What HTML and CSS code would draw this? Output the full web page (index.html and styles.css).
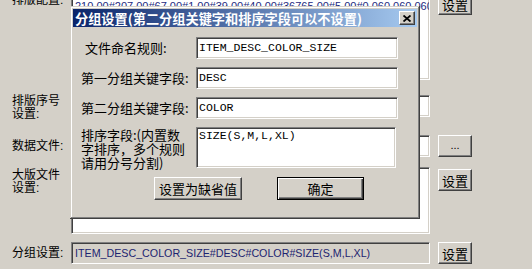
FILE: index.html
```html
<!DOCTYPE html>
<html lang="zh-CN">
<head>
    <meta charset="UTF-8">
    <title>分组设置</title>
    <link rel="stylesheet" href="styles.css">
</head>
<body>
    <div class="screen">
        <!-- janela de fundo -->
        <div class="form">
            <div class="row row-config">
                <div class="label">排版配置:</div>
                <div class="field config-box">
                    <span class="config-text">210.00#207.00#67.00#1.00#39.00#40.00#36765.00#5.00#0.060.060.060,</span>
                </div>
                <div class="btn side-btn">设置</div>
            </div>
            <div class="row row-seq">
                <div class="label">排版序号<br>设置:</div>
                <div class="field"></div>
            </div>
            <div class="row row-data">
                <div class="label">数据文件:</div>
                <div class="field"></div>
                <div class="btn side-btn dots">...</div>
            </div>
            <div class="row row-plate">
                <div class="label">大版文件<br>设置:</div>
                <div class="field plate-box"></div>
                <div class="btn side-btn">设置</div>
            </div>
            <div class="row row-group">
                <div class="label">分组设置:</div>
                <div class="field readonly">ITEM_DESC_COLOR_SIZE#DESC#COLOR#SIZE(S,M,L,XL)</div>
                <div class="btn side-btn">设置</div>
            </div>
        </div>

        <!-- dialogo por cima -->
        <div class="dialog">
            <div class="titlebar">
                <span class="title">分组设置(第二分组关键字和排序字段可以不设置)</span>
                <div class="btn close-btn">
                    <svg width="8" height="7" viewBox="0 0 8 7">
                        <path d="M0.5 0.5 L7.5 6.5 M7.5 0.5 L0.5 6.5" stroke="#000" stroke-width="1.8" fill="none"/>
                    </svg>
                </div>
            </div>
            <div class="dialog-body">
                <div class="drow">
                    <div class="dlabel first">文件命名规则:</div>
                    <div class="input">ITEM_DESC_COLOR_SIZE</div>
                </div>
                <div class="drow">
                    <div class="dlabel">第一分组关键字段:</div>
                    <div class="input">DESC</div>
                </div>
                <div class="drow">
                    <div class="dlabel">第二分组关键字段:</div>
                    <div class="input">COLOR</div>
                </div>
                <div class="drow sort-row">
                    <div class="dlabel multi">排序字段:(内置数<br>字排序，多个规则<br>请用分号分割)</div>
                    <div class="input textarea">SIZE(S,M,L,XL)</div>
                </div>
                <div class="actions">
                    <div class="btn action-btn">设置为缺省值</div>
                    <div class="btn action-btn default">确定</div>
                </div>
            </div>
        </div>
    </div>
</body>
</html>
```

FILE: styles.css
```css
body {
    margin: 0;
    background: #d4d0c8;
    font-family: "Liberation Sans", "Noto Sans CJK SC", sans-serif;
    color: #000;
}

.screen {
    position: relative;
    width: 532px;
    height: 269px;
    overflow: hidden;
    background: #d4d0c8;
}

/* janela de fundo */
.form {
    margin-top: -10px;
    padding-left: 12px;
    display: flex;
    flex-direction: column;
}

.row {
    display: flex;
    align-items: flex-start;
}

.label {
    width: 59px;
    font-size: 12px;
    line-height: 13px;
}

.field {
    box-sizing: border-box;
    width: 359px;
    height: 22px;
    background: #fff;
    border-top: 1px solid #808080;
    border-left: 1px solid #808080;
    border-right: 1px solid #fff;
    border-bottom: 1px solid #fff;
    box-shadow: inset 1px 1px #404040, inset -1px -1px #d4d0c8;
}

.btn {
    box-sizing: border-box;
    display: flex;
    align-items: center;
    justify-content: center;
    background: #d4d0c8;
    border-top: 1px solid #fff;
    border-left: 1px solid #fff;
    border-right: 1px solid #404040;
    border-bottom: 1px solid #404040;
    box-shadow: inset -1px -1px #808080;
    font-family: "Noto Sans CJK SC", sans-serif;
    font-size: 13px;
}

.side-btn {
    width: 34px;
    height: 22px;
    margin-left: 8px;
}

.dots {
    font-family: "Liberation Sans", sans-serif;
    font-size: 11px;
    padding-bottom: 3px;
}

.row-config .label {
    padding-top: 4px;
}

.config-box {
    height: 90px;
    padding: 5px 0 0 3px;
    overflow: hidden;
}

.config-text {
    font-size: 11px;
    color: #1c2a80;
    white-space: nowrap;
}

.row-config .side-btn {
    margin-top: 3px;
}

.row-seq {
    margin-top: 15px;
}

.row-data {
    margin-top: 14px;
    align-items: center;
}

.row-plate {
    margin-top: 10px;
}

.row-plate .label {
    padding-top: 2px;
}

.plate-box {
    height: 67px;
}

.row-plate .side-btn {
    margin-top: 2px;
}

.row-group {
    margin-top: 8px;
    align-items: center;
}

.readonly {
    background: #d4d0c8;
    font-size: 10.7px;
    line-height: 20px;
    padding-left: 3px;
    color: #1c2470;
    white-space: nowrap;
}

/* dialogo */
.dialog {
    position: absolute;
    left: 70px;
    top: 6px;
    width: 350px;
    height: 213px;
    box-sizing: border-box;
    padding: 3px;
    background: #d4d0c8;
    box-shadow: inset -1px -1px #404040, inset 1px 1px #d4d0c8,
                inset -2px -2px #808080, inset 2px 2px #fff;
}

.titlebar {
    height: 18px;
    display: flex;
    align-items: center;
    justify-content: space-between;
    padding-left: 2px;
    background: linear-gradient(to right, #0a246a, #a6caf0);
}

.title {
    color: #fff;
    font-family: "Noto Sans CJK SC", sans-serif;
    font-weight: bold;
    font-size: 13.2px;
    white-space: nowrap;
}

.close-btn {
    width: 16px;
    height: 14px;
    margin-right: 2px;
}

.dialog-body {
    padding: 10px 0 0 8px;
}

.drow {
    display: flex;
    align-items: center;
    margin-bottom: 8px;
}

.dlabel {
    width: 115px;
    font-family: "Noto Sans CJK SC", sans-serif;
    font-size: 13px;
    line-height: 14px;
    white-space: nowrap;
}

.dlabel.first {
    padding-left: 4px;
    width: 111px;
}

.input {
    box-sizing: border-box;
    width: 202px;
    height: 22px;
    padding-left: 2px;
    background: #fff;
    border-top: 1px solid #808080;
    border-left: 1px solid #808080;
    border-right: 1px solid #fff;
    border-bottom: 1px solid #fff;
    box-shadow: inset 1px 1px #404040, inset -1px -1px #d4d0c8;
    font-family: "Liberation Mono", monospace;
    font-size: 11.5px;
    line-height: 20px;
}

.sort-row {
    align-items: flex-start;
    margin-bottom: 7px;
}

.dlabel.multi {
    padding-top: 1px;
}

.textarea {
    width: 200px;
    height: 41px;
    line-height: 16px;
}

.actions {
    display: flex;
    gap: 35px;
    padding-left: 73px;
}

.action-btn {
    width: 88px;
    height: 23px;
}

.action-btn.default {
    width: 87px;
    border: 1px solid #000;
    box-shadow: inset 1px 1px #fff, inset -1px -1px #404040, inset -2px -2px #808080;
}
```
